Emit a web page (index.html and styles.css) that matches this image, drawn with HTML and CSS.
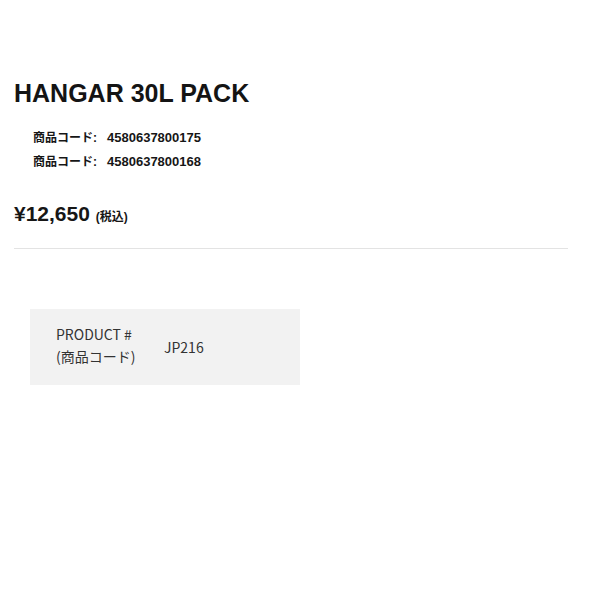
FILE: index.html
```html
<!DOCTYPE html>
<html lang="ja">
<head>
<meta charset="UTF-8" />
<meta name="viewport" content="width=device-width, initial-scale=1" />
<title>HANGAR 30L PACK</title>
<link rel="stylesheet" href="styles.css">
</head>
<body>

<section class="item">
  <h1 class="item-name">HANGAR 30L PACK</h1>
  <ul class="jan-list">
    <li><span class="jan-label">商品コード:</span><span class="jan-code">4580637800175</span></li>
    <li><span class="jan-label">商品コード:</span><span class="jan-code">4580637800168</span></li>
  </ul>
  <p class="price">¥12,650 <small>(税込)</small></p>
</section>

<table class="spec">
  <tr>
    <th>PRODUCT #<br>(商品コード)</th>
    <td>JP216</td>
  </tr>
</table>

</body>
</html>
```

FILE: styles.css
```css
/* — base — */
body{
  margin:0;background:#fff;color:#161616;
  font-family:'Liberation Sans',Arial,'Noto Sans CJK JP',sans-serif;
}

/* — item header — */
.item{margin:0 32px 0 14px;padding-top:77px;border-bottom:1px solid #e3e3e3;padding-bottom:18px;}
.item-name{margin:0;font-size:25px;line-height:32px;font-weight:bold;color:#141414;}
.jan-list{list-style:none;margin:17px 0 0;padding:0 0 0 19px;}
.jan-list li{font-size:12px;font-weight:bold;line-height:24px;display:flex;align-items:baseline;}
.jan-label{width:74px;}
.jan-code{font-size:13px;}
.price{margin:27px 0 0;font-size:21px;font-weight:bold;line-height:26px;}
.price small{font-size:12px;font-weight:bold;}

/* — spec table — */
.spec{margin:60px 0 0 30px;width:270px;border-collapse:collapse;background:#f2f2f2;}
.spec th,.spec td{
  font-size:14px;font-weight:normal;color:#333;text-align:left;line-height:22px;
  font-family:'Noto Sans CJK JP','Noto Sans',sans-serif;
}
.spec th{padding:14px 0 18px 26px;width:82px;}
.spec td{padding:0 0 0 26px;}
```
